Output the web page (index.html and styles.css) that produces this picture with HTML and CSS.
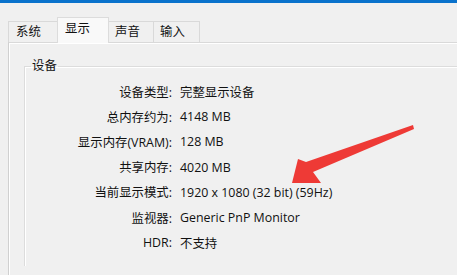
FILE: index.html
```html
<!DOCTYPE html>
<html lang="zh-CN">
<head>
<meta charset="utf-8">
<link rel="stylesheet" href="styles.css">
</head>
<body>
<div class="titlebar"></div>
<div class="tabs">
  <div class="tab t1">系统</div>
  <div class="tab t2 active">显示</div>
  <div class="tab t3">声音</div>
  <div class="tab t4">输入</div>
</div>
<div class="panel">
  <fieldset class="group">
    <legend class="legend">设备</legend>
    <div class="rows">
      <div class="label">设备类型:</div><div class="value">完整显示设备</div>
      <div class="label">总内存约为:</div><div class="value">4148 MB</div>
      <div class="label">显示内存(VRAM):</div><div class="value">128 MB</div>
      <div class="label">共享内存:</div><div class="value">4020 MB</div>
      <div class="label">当前显示模式:</div><div class="value">1920 x 1080 (32 bit) (59Hz)</div>
      <div class="label">监视器:</div><div class="value">Generic PnP Monitor</div>
      <div class="label">HDR:</div><div class="value">不支持</div>
    </div>
  </fieldset>
</div>
<svg class="arrow" width="457" height="275" viewBox="0 0 457 275">
  <polygon points="292,183 298,159 306,162 413,125 414,129 313,172 321,183" fill="#ee3a36"/>
</svg>
</body>
</html>
```
FILE: styles.css
```css
html, body {
  margin: 0;
  padding: 0;
}
body {
  width: 457px;
  height: 275px;
  overflow: hidden;
  background: #f0f0f0;
  font-family: "Open Sans", "Noto Sans CJK SC", sans-serif;
  font-size: 12.4px;
  color: #111111;
  position: relative;
}
.titlebar {
  height: 3px;
  background: #0a72cc;
}
.tabs {
  display: flex;
  align-items: flex-end;
  margin-top: 15px;
  padding-left: 8px;
  height: 24px;
  position: relative;
  z-index: 2;
}
.tab {
  box-sizing: border-box;
  height: 21px;
  padding: 0 0 0 7px;
  border: 1px solid #d9d9d9;
  border-bottom: none;
  background: #f0f0f0;
  line-height: 20px;
  margin-left: -1px;
}
.t1 {
  margin-left: 0;
  width: 50px;
}
.t3 {
  width: 47px;
}
.t4 {
  width: 47px;
  padding-left: 6px;
}
.tab.active {
  width: 52px;
  height: 26px;
  margin-bottom: -1px;
  background: #f9f9f9;
  border-color: #dcdcdc;
  padding-left: 7px;
  line-height: 22px;
  margin-right: -1px;
  position: relative;
  z-index: 3;
}
.panel {
  margin-left: 8px;
  border-top: 1px solid #d9d9d9;
  border-left: 1px solid #d0d0d0;
  box-shadow: inset 1px 1px 0 #ffffff;
  height: 216px;
  padding: 16px 0 0 15px;
}
.group {
  margin: 0;
  padding: 6px 0 0 0;
  border: 1px solid #dcdcdc;
  border-right: none;
  border-bottom: none;
  box-shadow: inset 1px 1px 0 #ffffff;
  min-width: 0;
  height: 200px;
}
.legend {
  padding: 0 1px;
  margin-left: 6px;
  line-height: 14px;
}
.rows {
  display: grid;
  grid-template-columns: 147px auto;
  column-gap: 8px;
  grid-auto-rows: 25.2px;
  align-items: center;
  margin-top: 0;
}
.label {
  text-align: right;
  white-space: nowrap;
}
.value {
  white-space: nowrap;
}
.arrow {
  position: absolute;
  left: 0;
  top: 0;
  pointer-events: none;
}
```
